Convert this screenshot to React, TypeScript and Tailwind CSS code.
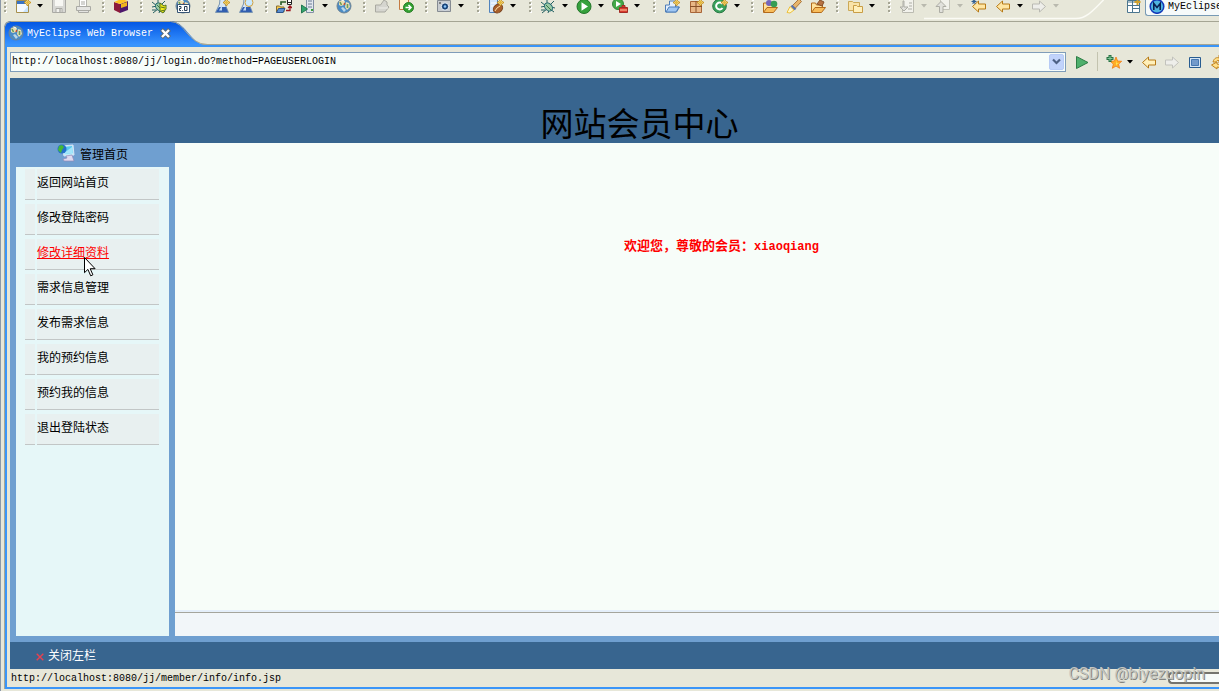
import React from 'react';

const menu = [
  '返回网站首页',
  '修改登陆密码',
  '修改详细资料',
  '需求信息管理',
  '发布需求信息',
  '我的预约信息',
  '预约我的信息',
  '退出登陆状态',
];

function Icon({ children }: { children: React.ReactNode }) {
  return (
    <svg viewBox="0 0 16 16" className="w-4 h-4 shrink-0" fill="none" aria-hidden="true">
      {children}
    </svg>
  );
}

function Caret({ muted = false }: { muted?: boolean }) {
  return (
    <svg viewBox="0 0 6 16" className="w-1.5 h-4 shrink-0" aria-hidden="true">
      <path d="M0 6h6L3 9.5z" fill={muted ? '#b9b9ae' : '#000'} />
    </svg>
  );
}

function Grip() {
  return (
    <svg viewBox="0 0 3 16" className="w-[3px] h-4 shrink-0" aria-hidden="true">
      <path d="M2 1v15" stroke="#fff" strokeWidth="2" strokeDasharray="2 2" />
      <path d="M1 0v16" stroke="#a5a594" strokeWidth="2" strokeDasharray="2 2" />
    </svg>
  );
}

function Tool({ label, menu, muted, children }: { label: string; menu?: boolean; muted?: boolean; children: React.ReactNode }) {
  return (
    <button type="button" aria-label={label} className="flex items-end gap-[6px] shrink-0">
      <Icon>{children}</Icon>
      {menu && <Caret muted={muted} />}
    </button>
  );
}

const spark = (
  <>
    <path d="m12.5 1 1.2 2.3L16 4.5l-2.3 1.2L12.5 8l-1.2-2.3L9 4.5l2.3-1.2z" fill="#fff3b0" stroke="#c8921c" />
    <path d="M12.5 3v3M11 4.5h3" stroke="#e5b93a" />
  </>
);
const arrowLeft = 'M1.5 8.5 7.5 3v3h7v5h-7v3z';
const arrowRight = 'M14.5 8.5 8.5 3v3h-7v5h7v3z';

const globe = (
  <>
    <circle cx="8" cy="8" r="7" fill="#4a8cc6" stroke="#6f8494" />
    <path d="M3 3.5 6 2l3 1-1 4-3 1-2-1zM10 4l3 1 1 4-3 3-2-3z" fill="#e9dfb4" />
    <path d="M4 4 5.5 7M11.5 6v4" stroke="#6b9c5a" strokeWidth="1.6" />
    <path d="m5 10 3 4 2-2-3-3z" fill="#b9d6e8" />
    <path d="m8 7 .8-2" stroke="#c8502e" strokeWidth="1.4" />
    <path d="M5.5 1.8 8 3" stroke="#fff" />
  </>
);

const beetle = (
  <>
    <path d="m1 4 5 4-5 1m1 6 5-4m1 4 1-3m5 2-4-3m5-1-4-1m3-6-4 4M7 2v5M1 12h4" stroke="#256060" />
    <ellipse cx="8.5" cy="9" rx="3.4" ry="4.6" transform="rotate(-42 8.5 9)" fill="#9ac9a5" stroke="#1e6570" />
    <path d="m6 7 5 5" stroke="#39784b" />
  </>
);

const play = (
  <>
    <circle cx="8" cy="8.5" r="7" fill="#35a13c" stroke="#23762a" />
    <path d="M5.5 4.2 12 8.5l-6.5 4.3z" fill="#fff" />
  </>
);

const flask = (
  <>
    <path d="M6 1h5v5l3.5 8.5h-13L5.5 6z" fill="#d8e7f5" stroke="#7995b1" />
    <path d="M5 9h7l2 5H2z" fill="#315eb0" />
    <path d="M5 12.5 8 7v5.5z" fill="#c2daf5" />
  </>
);

const openFolder = (
  <>
    <path d="M1.5 14V5h4l1 2h6v2" fill="#ffe29c" stroke="#b36a1b" />
    <path d="M1.5 14.5 5 9.5h10.5l-4 5z" fill="#f8bd5b" stroke="#b36a1b" />
  </>
);

function ToolBar() {
  return (
    <div className="relative flex items-start h-[21px] overflow-hidden pl-[3px]">
      <div className="flex items-end h-[14px] overflow-hidden shrink-0">
        <div className="flex items-end gap-2 w-[98px] shrink-0">
          <Grip />
          <Tool label="New" menu>
            <path d="M1.5 2.5h12v12h-12z" fill="#f4f9ff" stroke="#a68f4d" />
            <path d="M2 3h9v3H2z" fill="#3973c4" />
            <path d="M8 14h5V8z" fill="#c8e4ff" />
            {spark}
          </Tool>
          <Tool label="Save">
            <path d="M1.5 1.5h13v13h-13z" fill="#d8d8d4" stroke="#aaaaa5" />
            <path d="M4 2h8v6H4z" fill="#f7f7f3" />
            <path d="M5 10.5h6v4H5z" fill="#f2f2ee" stroke="#aaaaa5" />
            <path d="M9 11v3" stroke="#8f8f8a" />
          </Tool>
          <Tool label="Print">
            <path d="M4.5 1.5h7v7h-7z" fill="#fff" stroke="#b5b5af" />
            <path d="M1.5 8.5h14v4h-14zM3.5 12.5h10v2h-10z" fill="#e5e5e2" stroke="#aaaaa5" />
            <path d="M6 4h4M6 6h4" stroke="#aaaaa5" />
          </Tool>
        </div>
        <div className="flex items-end gap-2 w-[38px] shrink-0">
          <Grip />
          <Tool label="Package">
            <path d="m1 4 6 2v9l-6-3z" fill="#8c1a3c" />
            <path d="m7 6 8-3v9l-8 3z" fill="#4d176c" />
            <path d="m1 4 7-3 7 2-8 3z" fill="#ffc322" />
            <path d="m8 6 6-2v4l-6 2z" fill="#f0b41c" />
          </Tool>
        </div>
        <div className="flex items-end gap-2 w-[63px] shrink-0">
          <Grip />
          <Tool label="Debug web">
            {beetle}
            <path d="m9 5 4 3 2-1v4l-3 4-3-2z" fill="#f4ed18" stroke="#54731d" />
            <path d="m10 9 4 1m-4 3 4-1" stroke="#54731d" />
          </Tool>
          <Tool label="Web 2.0 browser">
            {globe}
            <path d="M2.5 6.5h12v8h-12z" fill="#fff" stroke="#365475" />
            <path d="M4 8.5h2v2H4.5v2H6M7.5 12v.8M9.5 8.5h2.5v4H9.5z" stroke="#263c55" />
          </Tool>
        </div>
        <div className="flex items-end gap-2 w-[62px] shrink-0">
          <Grip />
          <Tool label="New test">
            {flask}
            {spark}
          </Tool>
          <Tool label="Test browser">
            {flask}
            <circle cx="11" cy="4.5" r="4" fill="#c9e9ff" stroke="#d3a13c" />
          </Tool>
        </div>
        <div className="flex items-end gap-2 w-[98px] shrink-0">
          <Grip />
          <Tool label="Deploy">
            <path d="M5 7V4h5" stroke="#285d27" strokeWidth="1.6" />
            <path d="M11.5 1.5h4v5h-4z" fill="#fff" stroke="#222" />
            <path d="M11 4.5h5" stroke="#222" />
            <path d="M.5 14V8h3l1 1H8v5z" fill="#f5c952" stroke="#8b6e2b" />
            <path d="m.5 14.5 2-4H9l-2 4z" fill="#5b8fd0" stroke="#2b5590" />
            <path d="M10 12.5h4V8m-2 2 2-2 2 2" stroke="#9d1720" strokeWidth="1.3" />
          </Tool>
          <Tool label="Servers" menu>
            <path d="M6.5.5h7v14h-7z" fill="#e1e6ed" stroke="#8190a5" />
            <path d="M8 3h4M8 6h4M8 9h4" stroke="#6d7d93" />
            <path d="M11 12h2" stroke="#39a233" strokeWidth="2" />
            <path d="m1.5 7 6 4-6 4z" fill="#33a46d" stroke="#237750" />
          </Tool>
          <Tool label="Open browser">{globe}</Tool>
        </div>
        <div className="flex items-end gap-2 w-[62px] shrink-0">
          <Grip />
          <Tool label="Open type">
            <path d="M1.5 14V7h5L10 2l3 2v3l2 2-4 5z" fill="#d5d5cf" stroke="#a9a9a1" />
            <path d="M5 10h9" stroke="#efefea" />
          </Tool>
          <Tool label="Export">
            <path d="M1.5 1.5h9v10h-9z" fill="#fff3d2" stroke="#c47a43" />
            <circle cx="10.5" cy="9.5" r="5" fill="#32a130" stroke="#287e27" />
            <path d="M7.5 9.5h5m-2-2.5 2.5 2.5-2.5 2.5" stroke="#fff" strokeWidth="1.5" />
          </Tool>
        </div>
        <div className="flex items-end gap-2 w-[52px] shrink-0">
          <Grip />
          <Tool label="Capture" menu>
            <path d="M1.5 2.5h13v11h-13z" fill="#c8ccd0" stroke="#858b92" />
            <circle cx="9" cy="8.5" r="3.7" fill="#194479" stroke="#f1f5fa" />
            <circle cx="9" cy="8.5" r="1.3" fill="#8dc9ff" />
            <path d="M3 5h2" stroke="#333" />
          </Tool>
        </div>
        <div className="flex items-end gap-2 w-[52px] shrink-0">
          <Grip />
          <Tool label="New bean" menu>
            <path d="M1.5 1.5h8v13h-8z" fill="#d2e5fb" stroke="#5183bd" />
            <path d="M3 5h5M3 8h4" stroke="#fff" />
            <ellipse cx="10" cy="10.5" rx="5" ry="4" transform="rotate(-40 10 10.5)" fill="#a9602c" stroke="#79411d" />
            <path d="m7 13 2-3 3-2" stroke="#ffdda6" />
            {spark}
          </Tool>
        </div>
        <div className="flex items-end gap-2 w-[124px] shrink-0">
          <Grip />
          <Tool label="Debug" menu>{beetle}</Tool>
          <Tool label="Run" menu>{play}</Tool>
          <Tool label="External tools" menu>
            <circle cx="6" cy="6" r="5.5" fill="#45a949" stroke="#33863a" />
            <path d="m4 3 5 3-5 3z" fill="#fff" />
            <path d="M7.5 9.5h8v5h-8zM10 9V7.5h3V9" fill="#d83a2d" stroke="#a32b25" />
            <path d="M8 12h7" stroke="#ffd0a6" />
          </Tool>
        </div>
        <div className="flex items-end gap-2 w-[98px] shrink-0">
          <Grip />
          <Tool label="New project">
            <path d="M1.5 14V7h4V3h6v6h4l-3 5z" fill="#e3effd" stroke="#4f7eb8" />
            <path d="m2 14 3-5h10l-3 5z" fill="#9fc7f4" stroke="#4f7eb8" />
            {spark}
          </Tool>
          <Tool label="New package">
            <path d="M2.5 3.5h11v11h-11z" fill="#e9b787" stroke="#a86538" />
            <path d="M2 8.5h12M8 3v11" stroke="#885029" />
            {spark}
          </Tool>
          <Tool label="New class" menu>
            <circle cx="7.5" cy="8" r="6.8" fill="#39a15b" stroke="#277742" />
            <path d="M10.5 6a3.5 3.5 0 1 0 0 4" stroke="#fff" strokeWidth="2" />
            {spark}
          </Tool>
        </div>
        <div className="flex items-end gap-2 w-[85px] shrink-0">
          <Grip />
          <Tool label="Open resource">
            {openFolder}
            <circle cx="7" cy="5" r="3" fill="#7565bc" />
            <circle cx="12" cy="6" r="3.3" fill="#369d54" />
          </Tool>
          <Tool label="Search">
            <path d="m6 8 7-7 2.5 2.5-6.5 7z" fill="#e7b56b" stroke="#a9763d" />
            <path d="M4 8.5 8 12l-4 3-3-.5z" fill="#fff6c8" stroke="#edc03b" />
            <path d="m5.5 7.5 4 4" stroke="#5c74a9" strokeWidth="2.4" />
          </Tool>
          <Tool label="Open package">
            {openFolder}
            <path d="m7 6 3-4 4 2-2 4z" fill="#b87342" stroke="#85502a" />
          </Tool>
        </div>
        <div className="flex items-end gap-2 w-[52px] shrink-0">
          <Grip />
          <Tool label="Working set" menu>
            <path d="M1.5 12.5v-9h4l1 1h6v8z" fill="#f9e3a8" stroke="#cba957" />
            <path d="M6.5 14.5v-7h3l1 1h5v6z" fill="#fff0bb" stroke="#c99d45" />
          </Tool>
        </div>
        <div className="flex items-end gap-2 shrink-0">
          <Grip />
          <Tool label="Next annotation" menu muted>
            <path d="M5.5 1.5h9v13h-11v-5" fill="#f2f2ec" stroke="#bbbbb1" />
            <path d="M5 3v6h4L5 13 1 9h3V3zM10 5h3M10 8h3M9 11h4" fill="#e1e1dc" stroke="#adada5" />
          </Tool>
          <Tool label="Previous annotation" menu muted>
            <path d="M5.5 1.5h9v10h-9z" fill="#f2f2ec" stroke="#c5c5bb" />
            <path d="M4.5 14.5v-6H1l5-5 5 5H8v6z" fill="#e1e1dc" stroke="#adada5" />
          </Tool>
          <Tool label="Last edit location">
            <path d={arrowLeft} fill="#ffe6a3" stroke="#b77a16" />
            <path d="M3 1v5M.5 3.5h5m-4-2 3 4m0-4-3 4" stroke="#315e91" />
          </Tool>
          <Tool label="Back" menu>
            <path d={arrowLeft} fill="#ffe6a3" stroke="#b77a16" />
          </Tool>
          <Tool label="Forward" menu muted>
            <path d={arrowRight} fill="#eeeeea" stroke="#b9b9b2" />
          </Tool>
        </div>
      </div>
      {/* curved edge of the perspective bar */}
      <svg viewBox="0 0 180 20" className="absolute right-[115px] top-0 w-[180px] h-5" fill="none" aria-hidden="true">
        <path d="M0 18.5h152c11 0 18-9 28-19" stroke="#fbfbf5" strokeWidth="1.4" />
      </svg>
      <div className="ml-auto flex items-start w-[94px] shrink-0 overflow-hidden">
        <button type="button" aria-label="Open perspective" className="flex items-end h-[13px] w-[20px] shrink-0 overflow-hidden">
          <Icon>
            <path d="M2.5 3.5h12v12h-12z" fill="#fff" stroke="#4b7690" />
            <path d="M2 5h12M2 8.5h12M7.5 4v12M8 11.5h6" stroke="#4b7690" />
            <path d="M12.5 2v6M9.5 5h6" stroke="#d1a22d" strokeWidth="2" />
          </Icon>
        </button>
        <button
          type="button"
          className="flex items-center gap-[3px] h-[16px] w-[90px] shrink-0 pl-[3px] pb-[3px] bg-[#f6fafa] border-l border-b border-[#779ab5] rounded-bl-[3px] text-black"
        >
          <Icon>
            <circle cx="8" cy="8.5" r="6.8" fill="#4fb4e0" stroke="#1439b8" strokeWidth="1.5" />
            <path d="M4.8 12V5.5L8 9.5l3.2-4V12" stroke="#0a2051" strokeWidth="1.6" />
          </Icon>
          MyEclipse
        </button>
      </div>
    </div>
  );
}

function EditorTab() {
  return (
    <div className="relative flex h-6 border-y border-[#a5a594] rounded-tl-[6px]">
      <svg viewBox="0 0 206 24" className="absolute left-0 top-[-1px] w-[206px] h-6" fill="none" aria-hidden="true">
        <defs>
          <linearGradient id="tab" x1="0" y1="0" x2="0" y2="1">
            <stop offset="0" stopColor="#0054e3" />
            <stop offset="1" stopColor="#3a95ff" />
          </linearGradient>
        </defs>
        <path d="M0 24V6l2-4 4-2h160c15 0 20 21 34 24z" fill="url(#tab)" />
        <path d="M.5 24V6l2-4 4-1.5h160c15 0 17 23 37 23" stroke="#a5a594" />
      </svg>
      <div className="relative flex items-center gap-[3px] pl-1 text-white">
        <Icon>{globe}</Icon>
        <span>MyEclipse Web Browser</span>
        <button type="button" aria-label="Close tab" className="ml-1">
          <svg viewBox="0 0 11 11" className="w-[11px] h-[11px]" aria-hidden="true">
            <path d="m1.5 1.5 8 8m0-8-8 8" stroke="#5e6a70" strokeWidth="4" />
            <path d="m2 2 7 7m0-7-7 7" stroke="#fff" strokeWidth="2.4" />
          </svg>
        </button>
      </div>
    </div>
  );
}

function AddressBar() {
  return (
    <div className="flex items-center h-[31px] shrink-0 pl-[3px] pb-0.5">
      <div className="flex items-center flex-1 min-w-0 h-5 border border-[#7f9db9] bg-[#f7fdfa] pr-px">
        <input
          aria-label="Address"
          defaultValue="http://localhost:8080/jj/login.do?method=PAGEUSERLOGIN"
          className="flex-1 min-w-0 h-full pl-px bg-transparent outline-none text-black"
        />
        <button type="button" aria-label="Show history" className="flex items-center justify-center w-[15px] h-4 rounded-xs border border-[#b7cbf5] bg-[#c1d3fb]">
          <svg viewBox="0 0 9 7" className="w-[9px] h-[7px]" fill="none" aria-hidden="true">
            <path d="m1 1.5 3.5 3.5L8 1.5" stroke="#4d6185" strokeWidth="2.2" />
          </svg>
        </button>
      </div>
      <div className="flex items-center w-[153px] shrink-0 overflow-hidden pl-2">
        <button type="button" aria-label="Go" className="mr-[7px] shrink-0">
          <Icon>
            <path d="M2.5 2.5 14 8.5l-11.5 6z" fill="#4fb06c" stroke="#2e7d46" />
          </Icon>
        </button>
        <span className="w-px h-[19px] bg-[#c3c3af] mr-2 shrink-0" />
        <button type="button" aria-label="Favorites" className="flex items-center gap-[5px] mr-2 shrink-0">
          <Icon>
            <path d="m10 3 1.6 4 4.1.3-3.1 2.8 1 4.2-3.6-2.2-3.7 2.2 1.1-4.2-3.2-2.8 4.2-.3z" fill="#ffae25" stroke="#f17c18" strokeWidth=".8" />
            <path d="m10 6 .7 3H13l-2 1-1 2z" fill="#ffe655" />
            <path d="M4 1v7M.5 4.5h7" stroke="#287343" strokeWidth="3" />
            <path d="M4 2v5M1.5 4.5h5" stroke="#82c99a" />
          </Icon>
          <Caret />
        </button>
        <button type="button" aria-label="Back" className="mr-[7px] shrink-0">
          <Icon>
            <path d={arrowLeft} fill="#fff0ba" stroke="#b77a16" />
          </Icon>
        </button>
        <button type="button" aria-label="Forward" className="mr-[7px] shrink-0">
          <Icon>
            <path d={arrowRight} fill="#eeeeea" stroke="#c2c2bc" />
          </Icon>
        </button>
        <button type="button" aria-label="Stop" className="mr-[7px] shrink-0">
          <Icon>
            <path d="M2.5 3.5h11v10h-11z" fill="#d5e5f4" stroke="#285c91" />
            <path d="M4.5 5.5h7v6h-7z" fill="#729acb" stroke="#4778b1" />
          </Icon>
        </button>
        <button type="button" aria-label="Refresh" className="shrink-0">
          <Icon>
            <path d="M3 8c1-4 4-5 6-4V1l5 4-5 4V6.5C7 6 6.500 7 6 8zM14 9c-1 4-4 5-7 4v2l-5.500-4L7 8v2c2 1 4 0 4-1z" fill="#ffe08b" stroke="#c3831c" />
          </Icon>
        </button>
      </div>
    </div>
  );
}

function Sidebar() {
  return (
    <nav className="flex flex-col w-[165px] shrink-0 px-1.5 bg-[#6f9fd0]">
      <div className="flex items-start justify-center h-6 shrink-0 gap-[5px] pt-px text-xs leading-6">
        <svg viewBox="0 0 18 18" className="w-[18px] h-[18px]" fill="none" aria-hidden="true">
          <path d="m5 2 11-1 1 10-10 1z" fill="#b9ecfb" stroke="#d7e4f5" />
          <path d="m7 3 8-1 .5 7L8 10z" fill="#58c8f0" />
          <path d="m7 9 8-6 .5 6L8 10z" fill="#a4e6fa" />
          <path d="m9 12 6-1 1 3 1 3H7l-1-2 4-1z" fill="#ddd9ef" stroke="#8f8ab7" strokeWidth=".7" />
          <circle cx="5" cy="5" r="4.5" fill="#2470c8" />
          <path d="m2 2 3-1 2 2-2 3-1 3-3-3z" fill="#44b936" />
        </svg>
        <h2>管理首页</h2>
      </div>
      <ul className="flex flex-col gap-1 flex-1 pt-0.5 pl-[9px] pr-2.5 bg-[#e6f7f8] text-xs">
        {menu.map((item, i) => (
          <li key={item} className="flex gap-0.5 h-[31px]">
            <span className="w-2.5 bg-[#e8f0f0] border-b border-[#c2c6c6]" />
            <span className="relative flex-1 pt-1.5 leading-[18px] bg-[#e8f0f0] border-b border-[#c2c6c6]">
              <a href="#" className={i === 2 ? 'text-[#f00] underline' : 'text-black'}>
                {item}
              </a>
              {i === 2 && (
                <svg viewBox="0 0 12 20" className="absolute left-[47px] top-[18px] z-10 w-3 h-5" aria-hidden="true">
                  <path d="M.5.5v15.2l3.4-3.3 2.8 6.4 2.2-1-2.7-6.1h4.9z" fill="#fff" stroke="#000" />
                </svg>
              )}
            </span>
          </li>
        ))}
      </ul>
    </nav>
  );
}

export default function App() {
  return (
    <div className="flex flex-col min-h-screen overflow-hidden bg-[#e7e7d9] border-l border-[#8b98a8] pb-0.5 text-[10px] text-black font-['Liberation_Mono','Noto_Sans_CJK_SC',monospace]">
      <ToolBar />
      <section className="flex flex-col flex-1 ml-[3px]">
        <EditorTab />
        <div className="flex flex-col flex-1 border-l border-[#a5a594]">
          <div className="flex flex-col flex-1 border-2 border-r-0 border-[#3a95f8]">
            <AddressBar />
            <div className="flex flex-col flex-1 ml-[3px]">
              <header className="flex items-end justify-center h-[65px] shrink-0 pl-[50px] bg-[#38658f]">
                <h1 className="text-[33px] leading-[30px]">网站会员中心</h1>
              </header>
              <div className="flex flex-1">
                <Sidebar />
                <div className="flex flex-col flex-1 min-w-0 bg-[#f7fdf9]">
                  <main className="flex-1 pt-[94px] pl-[49px] text-center text-[13px] leading-5 font-bold text-[#f00]">
                    欢迎您，尊敬的会员：<span className="text-xs">xiaoqiang</span>
                  </main>
                  <div className="h-[26px] shrink-0 border-t-2 border-[#e5effa] bg-[#f2f6f9]">
                    <div className="h-px bg-[#a5a59c]" />
                  </div>
                </div>
              </div>
              <div className="flex items-center h-[33px] shrink-0 pl-[26px] border-t-6 border-[#6f9fd0] bg-[#38658f] text-xs text-white">
                <button type="button" className="flex items-center gap-1 pt-0.5">
                  <svg viewBox="0 0 8 8" className="w-2 h-2" aria-hidden="true">
                    <path d="m.7.7 6.600 6.600m0-6.600L.7 7.3" stroke="#e8404f" strokeWidth="1.4" />
                  </svg>
                  关闭左栏
                </button>
              </div>
            </div>
            <footer className="relative flex items-center justify-between h-[18px] shrink-0 pl-1">
              <span>http://localhost:8080/jj/member/info/info.jsp</span>
              <div className="w-[51px] h-3 border-2 border-r-0 border-[#74746e] rounded-l-sm bg-[#f7fbf9]" />
              <span className="absolute right-[14px] bottom-[2px] text-[16px] leading-[22px] text-[#c4c6c2] text-shadow-[1px_1px_0_#85857f] font-['Roboto','Liberation_Sans',sans-serif]">
                CSDN @biyezuopin
              </span>
            </footer>
          </div>
        </div>
      </section>
    </div>
  );
}
